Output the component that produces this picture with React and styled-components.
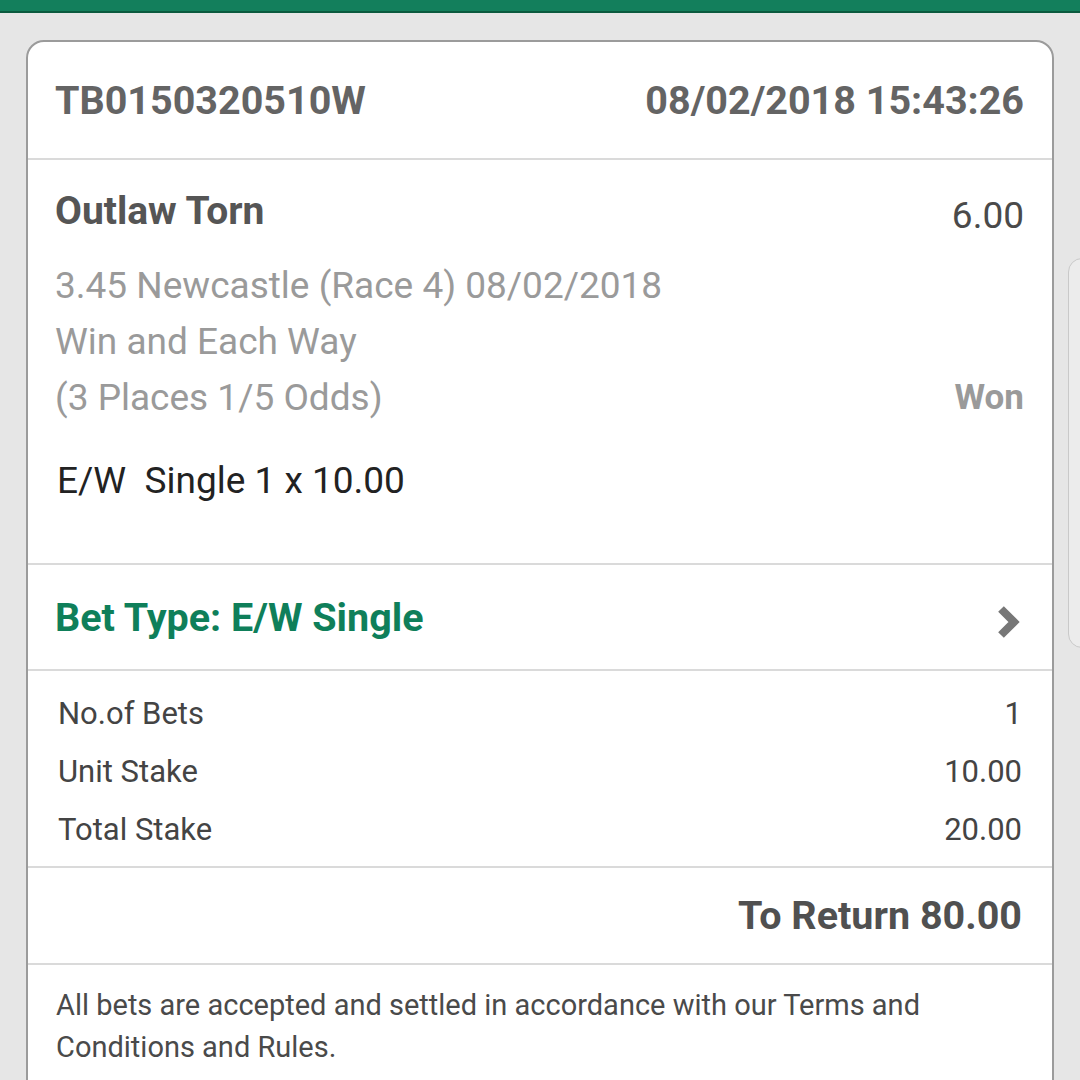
import React from 'react';
import styled, { createGlobalStyle } from 'styled-components';

const GlobalStyle = createGlobalStyle`
  html, body {
    margin: 0;
    padding: 0;
    background: #e6e6e6;
    font-family: Roboto, "Noto Sans", Arial, sans-serif;
    overflow: hidden;
  }
  * { box-sizing: border-box; }
`;

const Page = styled.div`
  width: 1080px;
  height: 1080px;
  overflow: hidden;
  display: flex;
  flex-direction: column;
`;

const TopBar = styled.div`
  height: 13px;
  background: #137f5c;
  border-bottom: 2px solid #0b5a3e;
  flex-shrink: 0;
`;

const Content = styled.div`
  display: flex;
  align-items: flex-start;
  gap: 14px;
  padding: 27px 0 0 26px;
`;

const Card = styled.div`
  width: 1028px;
  flex-shrink: 0;
  background: #fff;
  border: 2px solid #9b9b9b;
  border-radius: 18px;
  overflow: hidden;
`;

const SideTab = styled.div`
  width: 30px;
  height: 390px;
  margin-top: 218px;
  flex-shrink: 0;
  background: #ececec;
  border: 1px solid #c9c9c9;
  border-radius: 14px;
`;

const Section = styled.div`
  padding: ${(p) => p.$pad || '0 28px 0 27px'};
  border-top: ${(p) => (p.$first ? 'none' : '2px solid #dadada')};
`;

const HeaderRow = styled.div`
  height: 116px;
  display: flex;
  align-items: center;
  justify-content: space-between;
  font-size: 39.5px;
  font-weight: 700;
  color: #646464;
`;

const Row = styled.div`
  display: flex;
  justify-content: space-between;
  align-items: center;
  height: ${(p) => p.$h || 56}px;
  margin-top: ${(p) => p.$mt || 0}px;
`;

const HorseName = styled.span`
  font-size: 39px;
  font-weight: 700;
  color: #555;
`;

const Odds = styled.span`
  font-size: 37px;
  color: #4a4a4a;
  padding-top: 8px;
`;

const Info = styled.span`
  font-size: 37px;
  color: #9a9a9a;
`;

const Result = styled.span`
  font-size: 35px;
  font-weight: 700;
  color: #9a9a9a;
`;

const BetLine = styled.span`
  font-size: 37px;
  color: #222;
  padding-left: 2px;
  white-space: pre;
`;

const BetTypeRow = styled.div`
  height: 104px;
  display: flex;
  align-items: center;
  justify-content: space-between;
`;

const BetType = styled.span`
  font-size: 39.5px;
  font-weight: 700;
  color: #0f7f5a;
`;

const Chevron = styled.svg`
  width: 26px;
  height: 36px;
  margin-right: 3px;
  margin-top: 10px;
`;

const StakeRow = styled.div`
  display: flex;
  justify-content: space-between;
  align-items: center;
  height: 58px;
  font-size: 31px;
  color: #444;
  padding: 0 2px 0 3px;
`;

const ReturnRow = styled.div`
  height: 95px;
  display: flex;
  align-items: center;
  justify-content: flex-end;
  font-size: 39.5px;
  font-weight: 700;
  color: #505050;
  padding-right: 2px;
`;

const Disclaimer = styled.p`
  margin: 0;
  font-size: 29px;
  line-height: 42px;
  color: #4a4a4a;
  padding-right: 30px;
`;

export default function App() {
  return (
    <Page>
      <GlobalStyle />
      <TopBar />
      <Content>
        <Card>
          <Section $first>
            <HeaderRow>
              <span>TB0150320510W</span>
              <span>08/02/2018 15:43:26</span>
            </HeaderRow>
          </Section>

          <Section $pad="23px 28px 55px 27px">
            <Row>
              <HorseName>Outlaw Torn</HorseName>
              <Odds>6.00</Odds>
            </Row>
            <Row $mt={18}>
              <Info>3.45 Newcastle (Race 4) 08/02/2018</Info>
            </Row>
            <Row>
              <Info>Win and Each Way</Info>
            </Row>
            <Row>
              <Info>(3 Places 1/5 Odds)</Info>
              <Result>Won</Result>
            </Row>
            <Row $mt={27}>
              <BetLine>E/W  Single 1 x 10.00</BetLine>
            </Row>
          </Section>

          <Section>
            <BetTypeRow>
              <BetType>Bet Type: E/W Single</BetType>
              <Chevron viewBox="0 0 26 36">
                <path d="M6 5 L19 18 L6 31" fill="none" stroke="#777" strokeWidth="8" strokeLinejoin="miter" />
              </Chevron>
            </BetTypeRow>
          </Section>

          <Section $pad="13px 28px 8px 27px">
            <StakeRow>
              <span>No.of Bets</span>
              <span>1</span>
            </StakeRow>
            <StakeRow>
              <span>Unit Stake</span>
              <span>10.00</span>
            </StakeRow>
            <StakeRow>
              <span>Total Stake</span>
              <span>20.00</span>
            </StakeRow>
          </Section>

          <Section>
            <ReturnRow>To Return 80.00</ReturnRow>
          </Section>

          <Section $pad="19px 28px 40px 28px">
            <Disclaimer>
              All bets are accepted and settled in accordance with our Terms and Conditions and Rules.
            </Disclaimer>
          </Section>
        </Card>
        <SideTab />
      </Content>
    </Page>
  );
}
